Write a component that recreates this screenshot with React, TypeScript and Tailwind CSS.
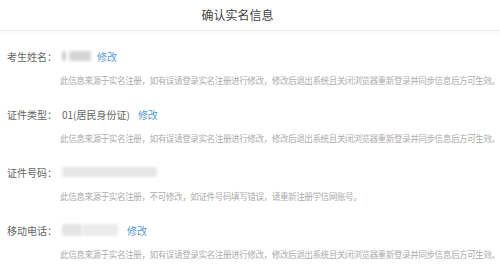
const font = { fontFamily: '"Noto Sans CJK SC", "Noto Sans", sans-serif' };

function Blur({ className }: { className: string }) {
  return <span className={`inline-block rounded-[2px] blur-[1.5px] ${className}`} />;
}

function Row({
  label,
  value,
  edit,
  note,
}: {
  label: string;
  value: React.ReactNode;
  edit?: React.ReactNode;
  note: string;
}) {
  return (
    <div className="mb-[10px]">
      <div className="flex h-[24px] items-center">
        <div className="w-[55px] shrink-0 whitespace-nowrap pl-[7px] text-[10px] text-[#666]">{label}</div>
        <div className="flex items-center whitespace-nowrap text-[10px] text-[#666]">
          {value}
          {edit}
        </div>
      </div>
      <div className="flex h-[24px] items-center pl-[60px]">
        <span className="whitespace-nowrap text-[8.6px] tracking-[-0.45px] text-[#adadad]">{note}</span>
      </div>
    </div>
  );
}

const edit = (ml: string) => <span className={`${ml} text-[10px] text-[#5b9bd5]`}>修改</span>;

const note1 =
  '此信息来源于实名注册，如有误请登录实名注册进行修改，修改后退出系统且关闭浏览器重新登录并同步信息后方可生效。';

export default function App() {
  return (
    <div className="h-[270px] w-[500px] overflow-hidden bg-white" style={font}>
      <div className="flex h-[31px] items-center justify-center border-b border-[#eee] pr-[25px] text-[12px] text-[#444] shadow-[0_2px_3px_rgba(0,0,0,0.04)]">
        确认实名信息
      </div>
      <div className="pt-[13px]">
        <Row
          label="考生姓名："
          value={
            <span className="ml-[7px] flex items-center">
              <Blur className="h-[10px] w-[4px] bg-[#ccc]" />
              <Blur className="ml-[3px] h-[10px] w-[22px] bg-[#d4d4d4]" />
            </span>
          }
          edit={edit('ml-[6px]')}
          note={note1}
        />
        <Row label="证件类型：" value={<span className="ml-[7px]">01(居民身份证)</span>} edit={edit('ml-[8px]')} note={note1} />
        <Row
          label="证件号码："
          value={<Blur className="ml-[7px] h-[10px] w-[95px] bg-[#e6e6e6]" />}
          note="此信息来源于实名注册，不可修改，如证件号码填写错误，请重新注册学信网账号。"
        />
        <Row
          label="移动电话："
          value={
            <span className="ml-[7px] flex items-center">
              <Blur className="h-[12px] w-[20px] bg-[#e4e4e4]" />
              <Blur className="h-[12px] w-[36px] bg-[#ebebeb]" />
            </span>
          }
          edit={edit('ml-[9px]')}
          note={note1}
        />
      </div>
    </div>
  );
}
